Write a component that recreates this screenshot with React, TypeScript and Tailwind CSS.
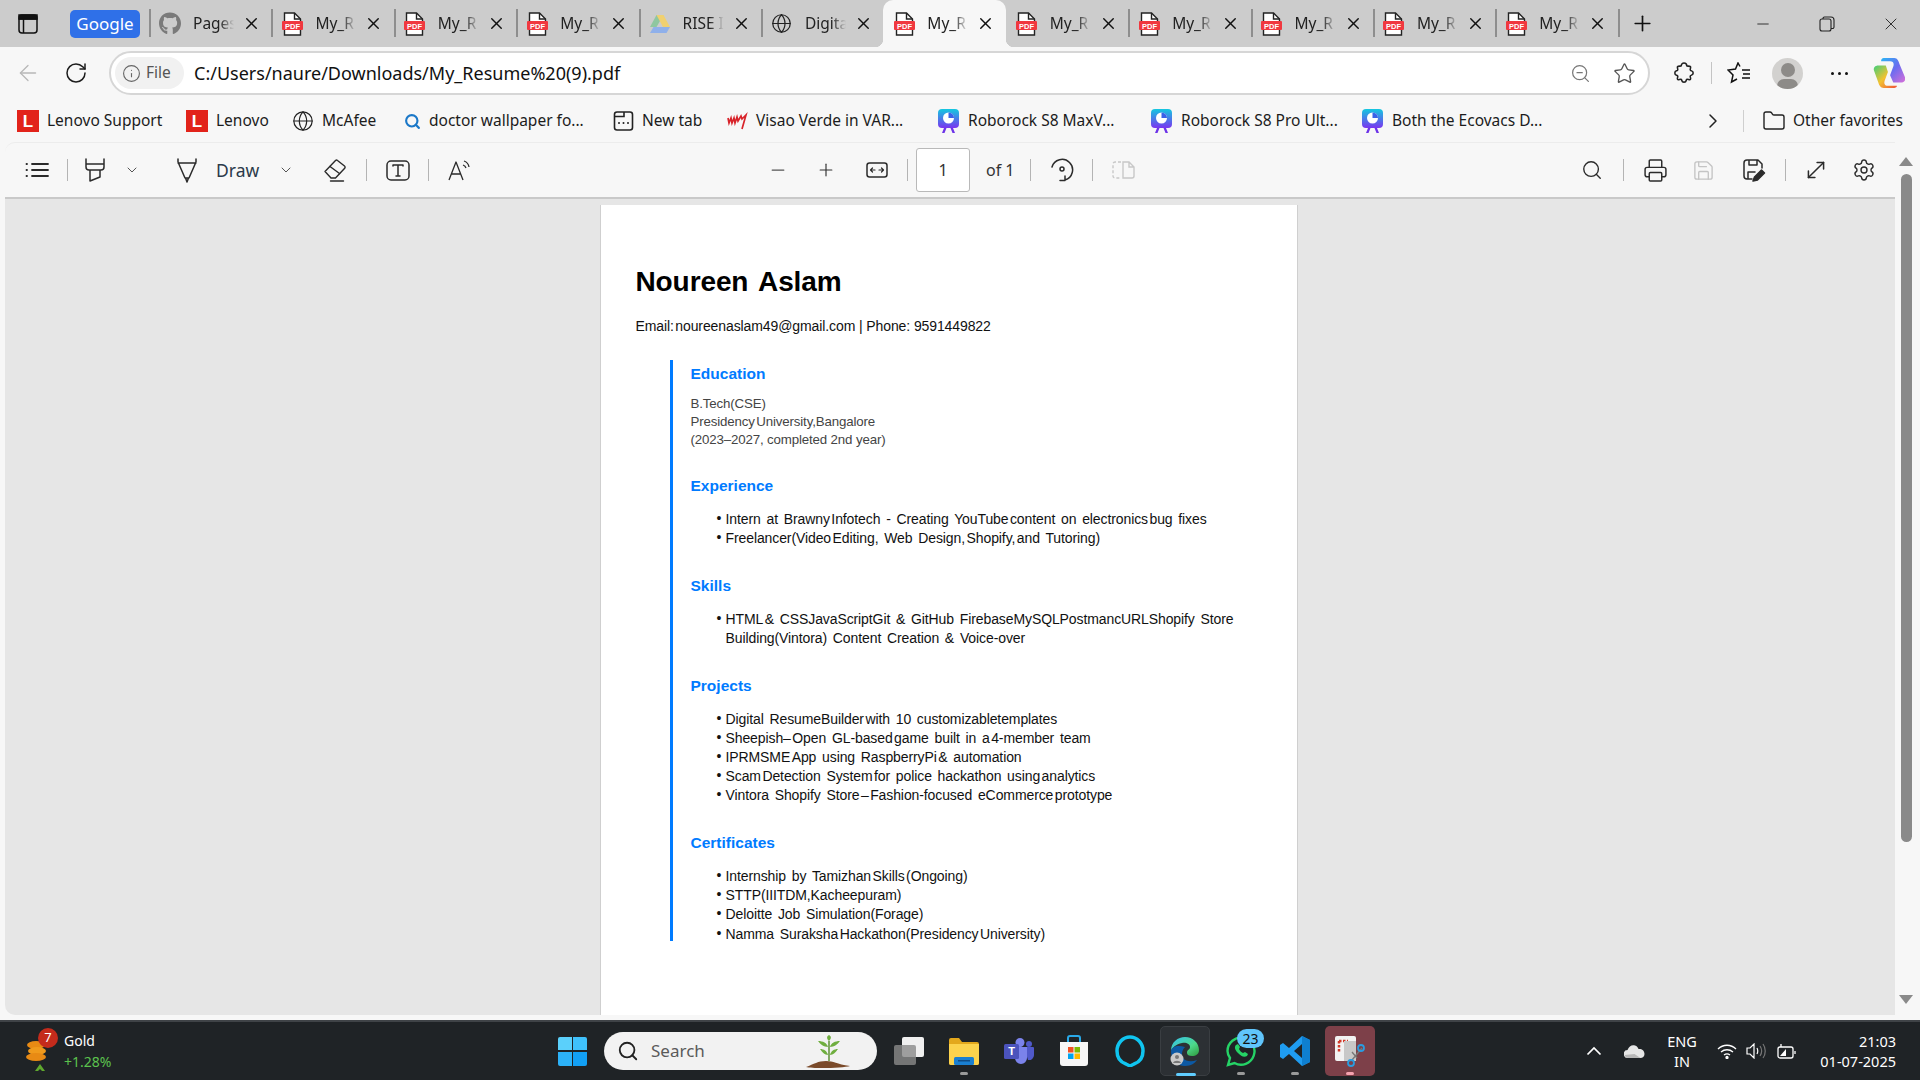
import { ArrowLeft, ChevronDown, ChevronRight, Folder, Info, Minus, Plus, RotateCw, Search, Settings, Star, X, ZoomOut, Printer, Save, MoveDiagonal, Globe } from 'lucide-react';
import { FaGithub } from 'react-icons/fa';
import { ReactNode } from 'react';

const PdfIcon = () => (
  <svg width="21" height="24" viewBox="0 0 21 24">
    <path d="M2.5 1h10l6 6v16h-16z" fill="#fff" stroke="#222" strokeWidth="1.4" />
    <path d="M12.5 1v6h6" fill="none" stroke="#222" strokeWidth="1.4" />
    <rect x="0" y="9" width="21" height="9" rx="1" fill="#f0383f" />
    <text x="10.5" y="16.5" textAnchor="middle" fontSize="7.5" fontWeight="700" fill="#fff" fontFamily="Liberation Sans, sans-serif">PDF</text>
  </svg>
);

const DriveIcon = () => (
  <svg width="22" height="20" viewBox="0 0 22 20">
    <path d="M7.5 1h7l-7 12H1z" fill="#8fc7a0" />
    <path d="M7.5 1h7l6.5 12h-7z" fill="#f0d070" />
    <path d="M4.5 13H21l-3.5 6H1z" fill="#8fb0ea" />
  </svg>
);

const RoboIcon = () => (
  <svg width="23" height="24" viewBox="0 0 23 24">
    <defs>
      <linearGradient id="robo" x1="0" y1="0" x2="0" y2="1">
        <stop offset="0" stopColor="#14c8e0" />
        <stop offset="1" stopColor="#7a35f0" />
      </linearGradient>
    </defs>
    <rect x="1" y="0" width="21" height="19" rx="4" fill="url(#robo)" />
    <path d="M7 19l-2 5h2.500l2-5zM16 19l2 5h-2.500l-2-5z" fill="#6d33e8" />
    <circle cx="11.500" cy="9" r="5.500" fill="#fff" />
    <path d="M11.500 9V3.500a5.500 5.500 0 0 1 5.500 5.500z" fill="#3a62e8" />
  </svg>
);

const LenovoIcon = () => (
  <div className="w-[22px] h-[22px] bg-[#e2231a] flex items-center justify-center text-white font-bold text-[17px] leading-none font-['Liberation_Sans',sans-serif]">L</div>
);

const tabs: { icon: ReactNode; label: string; active?: boolean; noSep?: boolean }[] = [
  { icon: <FaGithub size={23} className="text-[#7a7a7a]" />, label: 'Pages' },
  { icon: <PdfIcon />, label: 'My_R' },
  { icon: <PdfIcon />, label: 'My_R' },
  { icon: <PdfIcon />, label: 'My_R' },
  { icon: <DriveIcon />, label: 'RISE I' },
  { icon: <Globe size={21} strokeWidth={1.4} className="text-[#222]" />, label: 'Digita' },
  { icon: <PdfIcon />, label: 'My_R', active: true },
  { icon: <PdfIcon />, label: 'My_R', noSep: true },
  { icon: <PdfIcon />, label: 'My_R' },
  { icon: <PdfIcon />, label: 'My_R' },
  { icon: <PdfIcon />, label: 'My_R' },
  { icon: <PdfIcon />, label: 'My_R' },
];

const Tab = ({ icon, label, active, noSep }: { icon: ReactNode; label: string; active?: boolean; noSep?: boolean }) => (
  <div className={`relative w-[122.4px] h-[47px] shrink-0 flex items-center ${active ? 'bg-[#f7f7f7] rounded-t-[10px]' : ''}`}>
    {!active && !noSep && <div className="w-[2px] h-[28px] bg-[#8e8e8e] mb-[1px]" />}
    <div className={`w-[22px] flex justify-center ${active || noSep ? 'ml-[10px]' : 'ml-[8px]'}`}>{icon}</div>
    <div className="ml-[12px] w-[41px] overflow-hidden whitespace-nowrap text-[15.5px] text-[#222] [mask-image:linear-gradient(to_right,black_65%,transparent)]">{label}</div>
    <X size={19} strokeWidth={1.8} className="ml-[8px] text-[#111]" />
    {active && <div className="absolute left-[-8px] bottom-0 w-[8px] h-[8px] bg-[radial-gradient(circle_at_0_0,transparent_8px,#f7f7f7_8.500px)]" />}
    {active && <div className="absolute right-[-8px] bottom-0 w-[8px] h-[8px] bg-[radial-gradient(circle_at_100%_0,transparent_8px,#f7f7f7_8.500px)]" />}
  </div>
);

const bookmarks: { w: number; icon: ReactNode; label: string }[] = [
  { w: 169, icon: <LenovoIcon />, label: 'Lenovo Support' },
  { w: 106, icon: <LenovoIcon />, label: 'Lenovo' },
  { w: 112, icon: <Globe size={22} strokeWidth={1.3} className="text-[#222]" />, label: 'McAfee' },
  { w: 209, icon: <Search size={17} strokeWidth={3} className="text-[#1b78c8]" />, label: 'doctor wallpaper fo...' },
  {
    w: 113,
    icon: (
      <svg width="21" height="22" viewBox="0 0 21 22" fill="none" stroke="#222" strokeWidth="1.6">
        <path d="M4 2h13a2.500 2.500 0 0 1 2.500 2.500v13A2.500 2.500 0 0 1 17 20H4a2.500 2.500 0 0 1-2.500-2.500v-13A2.500 2.500 0 0 1 4 2z" />
        <path d="M1.500 6.500H11V2" />
        <path d="M6 13h.01M10.500 13h.01M15 13h.01" strokeWidth="2" strokeLinecap="round" />
      </svg>
    ),
    label: 'New tab',
  },
  {
    w: 211,
    icon: (
      <svg width="22" height="22" viewBox="0 0 22 22" fill="none" stroke="#d8232a" strokeWidth="1.700">
        <path d="M2 8l1 5 2-5 1 5 2-5 1 5 2-6 1 4 3-5 1 3 4-4-4 14" />
      </svg>
    ),
    label: 'Visao Verde in VAR...',
  },
  { w: 213, icon: <RoboIcon />, label: 'Roborock S8 MaxV...' },
  { w: 211, icon: <RoboIcon />, label: 'Roborock S8 Pro Ult...' },
  { w: 340, icon: <RoboIcon />, label: 'Both the Ecovacs D...' },
];

const Sep = ({ ml }: { ml: string }) => <div className={`w-[1px] h-[22px] bg-[#b4b4b4] ${ml}`} />;

const Box = ({ ml, children }: { ml: string; children: ReactNode }) => (
  <div className={`w-[32px] h-[32px] flex items-center justify-center shrink-0 ${ml}`}>{children}</div>
);

const stroke = { fill: 'none', stroke: '#2b2b2b', strokeWidth: 1.5, strokeLinecap: 'round', strokeLinejoin: 'round' } as const;

const Toolbar = () => (
  <div className="h-[57px] shrink-0 flex items-center bg-[#f7f7f7] border-b-2 border-[#c9c9c9] rounded-tl-[10px] border-t border-t-[#ececec]">
    <div className="ml-[12px] w-[40px] flex justify-center">
      <svg width="24" height="16" viewBox="0 0 24 16" {...stroke}>
        <path d="M7 2h16M7 8h16M7 14h16M1.500 2h.5M1.500 8h.5M1.500 14h.5" strokeWidth="1.800" />
      </svg>
    </div>
    <Sep ml="ml-[10px]" />
    <Box ml="ml-[11px]">
      <svg width="22" height="24" viewBox="0 0 22 24" {...stroke}>
        <path d="M2 1v8a3 3 0 0 0 3 3h12a3 3 0 0 0 3-3V1M2 6h18M6 12v11l10-4v-7" />
      </svg>
    </Box>
    <ChevronDown size={16} strokeWidth={1.5} className="ml-[13px] text-[#555]" />
    <Box ml="ml-[31px]">
      <svg width="24" height="25" viewBox="0 0 24 25" {...stroke}>
        <path d="M3 1v3l7 16h4l7-16V1M3 5h18M10.500 20l1.500 4 1.500-4" />
      </svg>
    </Box>
    <div className="ml-[13px] w-[43px] text-[17.5px] text-[#2b3a4a] whitespace-nowrap">Draw</div>
    <ChevronDown size={16} strokeWidth={1.5} className="ml-[19px] text-[#555]" />
    <Box ml="ml-[25px]">
      <svg width="24" height="24" viewBox="0 0 24 24" {...stroke} strokeWidth={1.4}>
        <path d="M2 13.500L12.500 2.500a1.500 1.500 0 0 1 2 0l7 5.500a1.500 1.500 0 0 1 .2 2.200L12.500 20H8z" />
        <path d="M7 8.500l9.500 7M7.500 23h13" />
      </svg>
    </Box>
    <Sep ml="ml-[15px]" />
    <Box ml="ml-[15px]">
      <svg width="24" height="21" viewBox="0 0 24 21" {...stroke}>
        <rect x="1" y="1" width="22" height="19" rx="4" />
        <path d="M7 6V5h10v1M12 5v11M10 16h4" />
      </svg>
    </Box>
    <Sep ml="ml-[14px]" />
    <Box ml="ml-[15px]">
      <svg width="24" height="22" viewBox="0 0 24 22" {...stroke}>
        <path d="M1 21L8 3l7 18M3.500 15h9M16 2c3 1 4.500 3 5 6M15 6c1.500.5 2.500 1.500 3 3" strokeLinecap="butt" strokeWidth="1.300" />
      </svg>
    </Box>

    <Box ml="ml-[286px]">
      <Minus size={20} strokeWidth={1.5} className="text-[#555]" />
    </Box>
    <Box ml="ml-[16px]">
      <Plus size={20} strokeWidth={1.4} className="text-[#333]" />
    </Box>
    <Box ml="ml-[19px]">
      <svg width="22" height="16" viewBox="0 0 22 16" {...stroke}>
        <rect x="1" y="1" width="20" height="14" rx="2.500" />
        <path d="M4.500 8H9M6.500 6L4.500 8l2 2M13 8h4.500M15.500 6l2 2-2 2" strokeWidth="1.200" />
      </svg>
    </Box>
    <Sep ml="ml-[14px]" />
    <div className="ml-[8px] w-[54px] h-[44px] rounded-[3px] bg-white border border-[#b9b9b9] flex items-center justify-center text-[16px] text-[#333]">1</div>
    <div className="ml-[16px] w-[27px] text-[16px] text-[#333] whitespace-nowrap">of 1</div>
    <Sep ml="ml-[17px]" />
    <Box ml="ml-[15px]">
      <svg width="24" height="24" viewBox="0 0 24 24" {...stroke}>
        <path d="M2 9a10.500 10.500 0 1 1 13 13M15 18v4.500h-5" />
        <circle cx="12" cy="11" r="2" />
      </svg>
    </Box>
    <Sep ml="ml-[14px]" />
    <Box ml="ml-[14px]">
      <svg width="23" height="18" viewBox="0 0 23 18" fill="none" stroke="#c8c8c8" strokeWidth="1.400">
        <path d="M9 1H3a2 2 0 0 0-2 2v12a2 2 0 0 0 2 2h6" strokeDasharray="3 2" />
        <path d="M11 1h6l5 5v9a2 2 0 0 1-2 2h-9zM17 1v5h5" />
      </svg>
    </Box>

    <Box ml="ml-[437px]">
      <Search size={22} strokeWidth={1.5} className="text-[#2b2b2b]" />
    </Box>
    <Sep ml="ml-[15px]" />
    <Box ml="ml-[15px]">
      <Printer size={25} strokeWidth={1.4} className="text-[#2b2b2b]" />
    </Box>
    <Box ml="ml-[16px]">
      <Save size={23} strokeWidth={1.4} className="text-[#c4c4c4]" />
    </Box>
    <Box ml="ml-[19px]">
      <svg width="24" height="24" viewBox="0 0 24 24" {...stroke}>
        <path d="M10 21H5a3 3 0 0 1-3-3V5a3 3 0 0 1 3-3h11l4 4v4M7 2v5h8V2M6 21v-7h7" />
        <path d="M11 23l1.500-4 7-7 3 3-7 7z" fill="#2b2b2b" />
      </svg>
    </Box>
    <Sep ml="ml-[15px]" />
    <Box ml="ml-[14px]">
      <MoveDiagonal size={26} strokeWidth={1.4} className="text-[#2b2b2b]" />
    </Box>
    <Box ml="ml-[16px]">
      <Settings size={24} strokeWidth={1.4} className="text-[#2b2b2b]" />
    </Box>
  </div>
);

// ~ marks the tight gaps the pdf renderer leaves between some words
const Squeezed = ({ text }: { text: string }) => (
  <>
    {text.split('~').map((part, i) => (
      <span key={i}>
        {i > 0 && <span className="inline-block w-[1.500px]" />}
        {part}
      </span>
    ))}
  </>
);

const sections = [
  {
    title: 'Experience',
    items: [
      ['Intern at Brawny~Infotech - Creating YouTube~content on electronics~bug fixes'],
      ['Freelancer(Video~Editing, Web Design,~Shopify,~and Tutoring)'],
    ],
  },
  {
    title: 'Skills',
    items: [['HTML~& CSSJavaScriptGit & GitHub FirebaseMySQLPostmancURLShopify Store', 'Building(Vintora) Content Creation & Voice-over']],
  },
  {
    title: 'Projects',
    items: [
      ['Digital ResumeBuilder~with 10 customizabletemplates'],
      ['Sheepish–~Open GL-based~game built in a~4-member team'],
      ['IPRMSME~App using RaspberryPi~& automation'],
      ['Scam~Detection System~for police hackathon using~analytics'],
      ['Vintora Shopify Store~–~Fashion-focused eCommerce~prototype'],
    ],
  },
  {
    title: 'Certificates',
    items: [
      ['Internship by Tamizhan~Skills~(Ongoing)'],
      ['STTP(IIITDM,Kacheepuram)'],
      ['Deloitte Job Simulation(Forage)'],
      ['Namma Suraksha~Hackathon(Presidency~University)'],
    ],
  },
];

const Resume = () => (
  <div className="w-[698px] h-[810px] bg-white mt-[6px] overflow-hidden border-x border-[#cfcfcf] pl-[35px] font-['Liberation_Sans',sans-serif]">
    <h1 className="mt-[60px] h-[34px] leading-[34px] text-[28px] font-bold text-black [word-spacing:3px] tracking-[-0.1px]">Noureen Aslam</h1>
    <p className="mt-[18px] h-[19px] leading-[19px] text-[14px] text-[#111] tracking-[-0.1px]">
      <Squeezed text="Email:~noureenaslam49@gmail.com | Phone: 9591449822" />
    </p>
    <div className="mt-[24px] ml-[34px] h-[581px] border-l-[3px] border-[#007bff] pl-[18px] pt-[4px]">
      <h2 className="h-[20px] leading-[20px] text-[15.500px] font-bold text-[#007bff]">Education</h2>
      <div className="mt-[11px] text-[13.300px] leading-[18px] text-[#444] tracking-[-0.15px]">
        <p>B.Tech(CSE)</p>
        <p>
          <Squeezed text="Presidency~University,Bangalore" />
        </p>
        <p>(2023–2027, completed 2nd year)</p>
      </div>
      {sections.map((s, n) => (
        <div key={s.title} className={n === 0 ? 'mt-[27px]' : 'mt-[28px]'}>
          <h2 className="h-[20px] leading-[20px] text-[15.500px] font-bold text-[#007bff]">{s.title}</h2>
          <ul className="mt-[14px] [&>li:nth-child(4):last-child]:mt-[1px]">
            {s.items.map((lines, i) => (
              <li key={i} className="relative pl-[35px] text-[14px] leading-[19px] text-[#111] tracking-[-0.1px] [word-spacing:2px]">
                <span className="absolute left-[26px] top-[-1px]">•</span>
                {lines.map((l, j) => (
                  <div key={j} className="whitespace-nowrap">
                    <Squeezed text={l} />
                  </div>
                ))}
              </li>
            ))}
          </ul>
        </div>
      ))}
    </div>
  </div>
);

const TaskIcon = ({ ml, dot, children }: { ml: string; dot?: boolean; children: ReactNode }) => (
  <div className={`relative w-[30px] h-[50px] flex items-center justify-center shrink-0 ${ml}`}>
    {children}
    {dot && <div className="absolute bottom-[1px] left-[11px] w-[8px] h-[3px] rounded-full bg-[#9a9a9a]" />}
  </div>
);

const Taskbar = () => (
  <div className="h-[60px] shrink-0 bg-[#1f2326] border-t-2 border-[#3f4347] flex items-center text-white">
    <div className="relative ml-[24px] w-[30px] h-[44px] shrink-0">
      <svg width="30" height="44" viewBox="0 0 30 44" className="mt-[2px]">
        <ellipse cx="12" cy="14" rx="9" ry="4" fill="#e88a14" />
        <ellipse cx="13" cy="20" rx="9" ry="4" fill="#f09a1c" />
        <ellipse cx="12" cy="26" rx="10" ry="4" fill="#e88a14" />
        <path d="M16 33l5 7h-3l-2-2-2 2h-3z" fill="#5fa82e" />
      </svg>
      <div className="absolute left-[14px] top-[-1px] w-[20px] h-[20px] rounded-full bg-[#c42b1c] text-[13px] flex items-center justify-center">7</div>
    </div>
    <div className="ml-[10px] w-[60px] text-[14px] leading-[21px]">
      <div>Gold</div>
      <div className="text-[#5cc24e]">+1.28%</div>
    </div>
    <div className="ml-[434px] w-[29px] h-[29px] grid grid-cols-2 gap-[1.500px] shrink-0">
      <div className="bg-[#5bd0fb] rounded-tl-[2px]" />
      <div className="bg-[#3fc1fb] rounded-tr-[2px]" />
      <div className="bg-[#2cb2f8] rounded-bl-[2px]" />
      <div className="bg-[#12a0f5] rounded-br-[2px]" />
    </div>
    <div className="ml-[17px] w-[273px] h-[38px] rounded-full bg-[#f2f2f2] flex items-center shrink-0 overflow-hidden">
      <Search size={22} strokeWidth={2} className="ml-[13px] text-[#222]" />
      <span className="ml-[12px] text-[17px] text-[#5a5a5a]">Search</span>
      <svg width="46" height="34" viewBox="0 0 46 34" className="ml-[101px] mt-[1px]">
        <path d="M23 26V6" stroke="#5c8f36" strokeWidth="1.500" />
        <path d="M23 6c-3-3-2-5 0-6 2 1 3 3 0 6zM22 12C18 12 14 9 12 6c5 0 9 2 10 6zM24 12c4 0 8-3 10-6-5 0-9 2-10 6zM22 20c-3 0-6-3-8-6 4 0 7 2 8 6zM24 20c3 0 6-3 8-6-4 0-7 2-8 6z" fill="#6fae3f" />
        <path d="M0 32c8-3 12-6 20-6s10 3 24 5c-6 2-36 3-44 1z" fill="#7a4a2a" />
      </svg>
    </div>
    <div className="relative ml-[17px] w-[30px] h-[28px] shrink-0">
      <div className="w-[22px] h-[20px] ml-[8px] rounded-[2px] bg-[#f0f0f0]" />
      <div className="absolute left-0 top-[8px] w-[22px] h-[20px] rounded-[2px] bg-[#8a8a8a]/80" />
    </div>
    <TaskIcon ml="ml-[25px]" dot>
      <svg width="30" height="27" viewBox="0 0 30 27">
        <path d="M0 2a2 2 0 0 1 2-2h8l3 4h15a2 2 0 0 1 2 2v19a2 2 0 0 1-2 2H2a2 2 0 0 1-2-2z" fill="#e3a81c" />
        <path d="M0 6h30v19a2 2 0 0 1-2 2H2a2 2 0 0 1-2-2z" fill="#fcd34d" />
        <rect x="5" y="19" width="20" height="8" rx="1.500" fill="#1a7fd0" />
        <rect x="9" y="22" width="12" height="1.500" fill="#0f4c85" />
      </svg>
    </TaskIcon>
    <TaskIcon ml="ml-[25px]">
      <svg width="30" height="26" viewBox="0 0 30 26">
        <circle cx="16" cy="4.500" r="4.500" fill="#7b83eb" />
        <circle cx="25" cy="6" r="3" fill="#5059c9" />
        <path d="M20 9h9a1 1 0 0 1 1 1v7a5 5 0 0 1-6 5z" fill="#5059c9" />
        <path d="M9 9h14v11a6 6 0 0 1-12 0z" fill="#7b83eb" />
        <rect x="0" y="6" width="15" height="15" rx="1.500" fill="#4b53bc" />
        <text x="7.500" y="17" textAnchor="middle" fontSize="11" fontWeight="700" fill="#fff" fontFamily="Liberation Sans, sans-serif">T</text>
      </svg>
    </TaskIcon>
    <TaskIcon ml="ml-[25px]">
      <svg width="30" height="32" viewBox="0 0 30 32">
        <path d="M9 7V3a2 2 0 0 1 2-2h8a2 2 0 0 1 2 2v4" fill="none" stroke="#29a9e8" strokeWidth="2" />
        <path d="M1 7h28v21a3 3 0 0 1-3 3H4a3 3 0 0 1-3-3z" fill="#f6f6f6" />
        <rect x="9" y="12" width="5.500" height="5.500" fill="#f25022" />
        <rect x="15.500" y="12" width="5.500" height="5.500" fill="#7fba00" />
        <rect x="9" y="18.500" width="5.500" height="5.500" fill="#00a4ef" />
        <rect x="15.500" y="18.500" width="5.500" height="5.500" fill="#ffb900" />
      </svg>
    </TaskIcon>
    <TaskIcon ml="ml-[26px]">
      <svg width="30" height="32" viewBox="0 0 30 32" fill="none">
        <path d="M11 29C5 27 2 22 2 16 2 8 8 2 15 2s13 6 13 14c0 6-3 11-9 13l-4 2z" stroke="#10c5f0" strokeWidth="3.500" />
      </svg>
    </TaskIcon>
    <div className="relative ml-[15px] w-[50px] h-[50px] bg-[#2c3034] rounded-[5px] border border-[#3a3e42] flex items-center justify-center shrink-0">
      <svg width="30" height="31" viewBox="0 0 30 31">
        <defs>
          <linearGradient id="edge" x1="0" y1="0" x2="1" y2="1">
            <stop offset="0" stopColor="#35c1f1" />
            <stop offset="0.6" stopColor="#4dd88a" />
            <stop offset="1" stopColor="#2f9a3c" />
          </linearGradient>
        </defs>
        <path d="M1 15C1 6 8 1 15 1c8 0 14 6 14 13 0 4-3 6-7 6-3 0-5-1-5-3 0-4 3-3 3-6 0-3-4-5-8-4-6 1-10 5-11 8z" fill="url(#edge)" />
        <path d="M1 15c0 9 6 15 14 15 6 0 10-3 12-6-5 2-11 2-14-2-2-3-1-8 2-11C8 9 2 10 1 15z" fill="#0c59a4" />
        <circle cx="7" cy="23" r="6.500" fill="#c9c9c9" />
        <circle cx="7" cy="21" r="2" fill="#777" />
        <path d="M3 27c1-3 7-3 8 0z" fill="#777" />
      </svg>
      <div className="absolute bottom-[-1px] left-[15px] w-[20px] h-[3px] rounded-full bg-[#60cdff]" />
    </div>
    <TaskIcon ml="ml-[16px]" dot>
      <div className="relative">
        <svg width="30" height="31" viewBox="0 0 30 31" fill="none">
          <path d="M2 29l2-7C2 19 1.500 17 1.500 15a13.500 13.500 0 1 1 7 12z" stroke="#25d366" strokeWidth="2.400" />
          <path d="M10 9c-2 2-1 5 2 8s6 5 9 3l1-2-3-2-2 1c-2-1-3-2-4-4l1-2-2-3z" fill="#25d366" />
        </svg>
        <div className="absolute left-[11px] top-[-7px] w-[27px] h-[19px] rounded-full bg-[#60c5fb] text-[#111] text-[14px] leading-[19px] text-center">23</div>
      </div>
    </TaskIcon>
    <TaskIcon ml="ml-[24px]" dot>
      <svg width="30" height="30" viewBox="0 0 30 30">
        <path d="M22 0l8 4v22l-8 4-13-12-6 5-3-2v-12l3-2 6 5zM22 8l-8 7 8 7z" fill="#1f9cf0" />
        <path d="M22 0l8 4v22l-8 4z" fill="#0e7fd0" />
      </svg>
    </TaskIcon>
    <div className="relative ml-[15px] w-[50px] h-[50px] bg-[#7d4049] rounded-[5px] flex items-center justify-center shrink-0">
      <svg width="30" height="32" viewBox="0 0 30 32">
        <rect x="0" y="1" width="21" height="25" rx="2" fill="#f2f2f2" />
        <path d="M4 6h9M4 6v12" stroke="#d13a2a" strokeWidth="2.500" strokeDasharray="2.500 1.500" fill="none" />
        <rect x="9" y="6" width="12" height="20" fill="#c8c8c8" />
        <path d="M17 17l5 6M27 13l-10 12" stroke="#777" strokeWidth="1.300" />
        <circle cx="26" cy="13" r="3" fill="none" stroke="#2a9ce0" strokeWidth="1.800" />
        <circle cx="16" cy="28" r="3" fill="none" stroke="#2a9ce0" strokeWidth="1.800" />
      </svg>
      <div className="absolute bottom-[1px] left-[21px] w-[8px] h-[3px] rounded-full bg-[#f5a3b0]" />
    </div>
    <svg width="16" height="10" viewBox="0 0 16 10" fill="none" stroke="#fff" strokeWidth="1.700" className="ml-[211px]">
      <path d="M1.500 8.500L8 2l6.500 6.500" />
    </svg>
    <svg width="21" height="15" viewBox="0 0 21 15" className="ml-[22px]">
      <path d="M4 14a4 4 0 0 1-.5-8C5 2 8 .5 11 1.500c2 .5 3 2 3.500 3.500 3-.5 6 1.500 6 5 0 2.500-2 4-4 4z" fill="#e6e6e6" />
      <path d="M4 14c-1 0-3-1-3.500-3l10-1 6 4z" fill="#b8b8b8" />
    </svg>
    <div className="ml-[17px] w-[40px] text-center text-[14.500px] leading-[20px] shrink-0">
      <div>ENG</div>
      <div>IN</div>
    </div>
    <svg width="20" height="15" viewBox="0 0 20 15" fill="none" stroke="#fff" strokeWidth="1.300" className="ml-[15px]">
      <path d="M1 5c5-5 13-5 18 0M4 8c3.500-3 8.500-3 12 0M7 11c2-1.500 4-1.500 6 0" />
      <circle cx="10" cy="13.500" r="1" fill="#fff" />
    </svg>
    <svg width="20" height="16" viewBox="0 0 20 16" fill="none" stroke="#fff" strokeWidth="1.200" className="ml-[9px]">
      <path d="M1 5h3l4-4v14l-4-4H1zM11 5c1 2 1 4 0 6" />
      <path d="M14 3c2 3 2 7 0 10M17 1c3 4 3 10 0 14" stroke="#777" />
    </svg>
    <svg width="20" height="15" viewBox="0 0 20 15" fill="none" stroke="#fff" strokeWidth="1.300" className="ml-[11px]">
      <rect x="1" y="3" width="15" height="11" rx="2" />
      <path d="M18 7v3" />
      <path d="M3 12l6-7v7z" fill="#fff" stroke="none" />
      <path d="M4 0v3" />
    </svg>
    <div className="ml-auto mr-[24px] text-right text-[14.500px] leading-[20px] shrink-0 whitespace-nowrap">
      <div>21:03</div>
      <div>01-07-2025</div>
    </div>
  </div>
);

export default function App() {
  return (
    <div className="w-[1920px] h-[1080px] overflow-hidden flex flex-col bg-[#f7f7f7] font-['Noto_Sans',sans-serif]">
      {/* tab strip */}
      <div className="h-[47px] shrink-0 bg-[#cccccc] flex items-center">
        <svg width="20" height="20" viewBox="0 0 20 20" fill="none" stroke="#111" strokeWidth="1.500" className="ml-[18px]">
          <rect x="1" y="1" width="18" height="18" rx="3" />
          <path d="M1 5h18M5.500 5v14" />
          <path d="M1 1h18v4H1z" fill="#111" />
        </svg>
        <div className="ml-[32px] w-[70px] h-[28px] rounded-[5px] bg-[#2f70e8] text-white text-[17px] leading-[27px] text-center">Google</div>
        <div className="ml-[9px] flex">
          {tabs.map((t, i) => (
            <Tab key={i} {...t} />
          ))}
        </div>
        <div className="w-[2px] h-[28px] bg-[#8e8e8e] mb-[1px]" />
        <Plus size={25} strokeWidth={1.6} className="ml-[10px] text-[#111]" />
        <Minus size={18} strokeWidth={1.200} className="ml-[99px] text-[#222]" />
        <svg width="16" height="16" viewBox="0 0 16 16" fill="none" stroke="#222" strokeWidth="1.100" className="ml-[47px]">
          <rect x="1" y="3" width="11" height="12" rx="2" />
          <path d="M4 3V2.500A1.500 1.500 0 0 1 5.500 1H12a3 3 0 0 1 3 3v7a1.500 1.500 0 0 1-1.500 1.500H12" />
        </svg>
        <X size={20} strokeWidth={1.100} className="ml-[46px] text-[#222]" />
      </div>

      {/* address row */}
      <div className="h-[49px] shrink-0 flex items-center pt-[3px]">
        <ArrowLeft size={26} strokeWidth={1.200} className="ml-[15px] text-[#b8b8b8]" />
        <RotateCw size={24} strokeWidth={1.500} className="ml-[23px] text-[#1c1c1c]" />
        <div className="ml-[21px] w-[1541px] h-[44px] rounded-full bg-white border-2 border-[#d6d6d6] flex items-center">
          <div className="ml-[4px] w-[69px] h-[32px] rounded-full bg-[#f1f1f1] flex items-center">
            <Info size={19} strokeWidth={1.400} className="ml-[7px] text-[#666]" />
            <span className="ml-[5px] text-[15.500px] text-[#555]">File</span>
          </div>
          <span className="ml-[10px] text-[18px] text-[#111]">C:/Users/naure/Downloads/My_Resume%20(9).pdf</span>
          <ZoomOut size={21} strokeWidth={1.400} className="ml-auto text-[#777]" />
          <Star size={23} strokeWidth={1.400} className="ml-[22px] mr-[12px] text-[#555]" />
        </div>
        <svg width="22" height="22" viewBox="0 0 24 24" fill="none" stroke="#222" strokeWidth="1.700" className="ml-[23px]">
          <path d="M9 4a3 3 0 0 1 6 0c0 1 3 0 4 1s-1 3 0 4 3 .5 3 3-2 2-3 3 1 3 0 4-3-1-4 0 0 3-3 3-2-2-3-3-3 1-4 0 1-3 0-4-3 0-3-3 2-2 3-3-1-3 0-4 4 0 4-1z" />
        </svg>
        <div className="ml-[16px] w-[1px] h-[22px] bg-[#c4c4c4]" />
        <svg width="24" height="22" viewBox="0 0 24 22" fill="none" stroke="#111" strokeWidth="1.500" className="ml-[15px]">
          <path d="M15 8h8M16 12h7M15 16h8M13 4.500L11 1 8.500 7 1 8l5 5-1.500 7L10 17" />
        </svg>
        <div className="relative ml-[21px] w-[31px] h-[31px] rounded-full bg-[#d2d1cf] overflow-hidden shrink-0">
          <div className="absolute left-[9px] top-[5px] w-[14px] h-[14px] rounded-full bg-[#8d8b88]" />
          <div className="absolute left-[5px] top-[21px] w-[21px] h-[14px] rounded-full bg-[#8d8b88]" />
        </div>
        <div className="ml-[28px] flex gap-[4px]">
          <div className="w-[3px] h-[3px] rounded-full bg-[#111]" />
          <div className="w-[3px] h-[3px] rounded-full bg-[#111]" />
          <div className="w-[3px] h-[3px] rounded-full bg-[#111]" />
        </div>
        <svg width="32" height="32" viewBox="0 0 30 30" className="ml-[25px]">
          <defs>
            <linearGradient id="cop1" x1="0" y1="0" x2="1" y2="1">
              <stop offset="0" stopColor="#2bb6f5" />
              <stop offset="0.5" stopColor="#6a6cf0" />
              <stop offset="1" stopColor="#d86fd8" />
            </linearGradient>
            <linearGradient id="cop2" x1="0" y1="0" x2="1" y2="1">
              <stop offset="0" stopColor="#3fcf7a" />
              <stop offset="0.5" stopColor="#f2c230" />
              <stop offset="1" stopColor="#f0503a" />
            </linearGradient>
          </defs>
          <path d="M10 1h10c3 0 4 3 5 6l5 12c1 3-1 5-4 5h-7l-3-7 3-8c1-3 0-5-3-5h-8c-1 0 0-3 2-3z" fill="url(#cop1)" />
          <path d="M20 29H10c-3 0-4-2-5-5L1 13c-1-3 1-5 4-5h7l2 6-3 8c-1 3 0 5 3 5h8c1 0 0 2-2 2z" fill="url(#cop2)" />
        </svg>
      </div>

      {/* favorites bar */}
      <div className="h-[46px] shrink-0 flex items-center pl-[17px] pt-[4px] text-[15.500px] text-[#1c1c1c] whitespace-nowrap">
        {bookmarks.map((b, i) => (
          <div key={i} className="flex items-center shrink-0" style={{ width: b.w }}>
            {b.icon}
            <span className="ml-[8px]">{b.label}</span>
          </div>
        ))}
        <ChevronRight size={24} strokeWidth={1.500} className="text-[#222]" />
        <div className="ml-[18px] w-[1px] h-[22px] bg-[#cfcfcf]" />
        <Folder size={24} strokeWidth={1.400} className="ml-[18px] text-[#222]" />
        <span className="ml-[7px]">Other favorites</span>
      </div>

      {/* pdf viewer */}
      <div className="flex-1 min-h-0 flex">
        <div className="w-[5px] shrink-0" />
        <div className="w-[1890px] flex flex-col">
          <Toolbar />
          <div className="h-[816px] bg-[#e6e6e6] rounded-bl-[10px] flex justify-center pr-[3px]">
            <Resume />
          </div>
        </div>
        <div className="w-[25px] flex flex-col items-center pr-[3px]">
          <div className="mt-[15px] w-0 h-0 border-x-[7px] border-x-transparent border-b-[9px] border-b-[#8a8a8a]" />
          <div className="mt-[8px] w-[11px] h-[668px] rounded-full bg-[#8a8a8a]" />
          <div className="mt-[153px] w-0 h-0 border-x-[7px] border-x-transparent border-t-[9px] border-t-[#8a8a8a]" />
        </div>
      </div>
      <Taskbar />
    </div>
  );
}
